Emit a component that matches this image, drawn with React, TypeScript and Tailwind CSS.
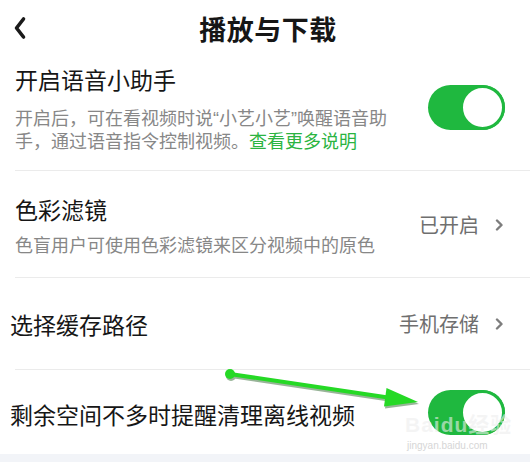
import React from "react";

const font = {
  fontFamily: '"Noto Sans CJK SC", "Noto Sans", sans-serif',
};

const latin = { fontFamily: '"Liberation Sans", sans-serif' };

function Toggle() {
  return (
    <div className="w-[77px] h-[45px] rounded-full bg-[#1fb83f] flex justify-end shrink-0">
      <div className="w-[45px] h-[45px] rounded-full bg-white border-[3px] border-[#1fb83f]" />
    </div>
  );
}

function Chevron() {
  return (
    <svg width="10" height="12" viewBox="0 0 10 12" className="shrink-0">
      <path
        d="M3 1.5 L7.5 6 L3 10.5"
        fill="none"
        stroke="#7d7d7d"
        strokeWidth="2.4"
        strokeLinecap="round"
        strokeLinejoin="round"
      />
    </svg>
  );
}

function Divider() {
  return <div className="h-px ml-[15px] bg-[#ebebeb]" />;
}

export default function App() {
  return (
    <div
      className="relative w-[530px] h-[462px] bg-white overflow-hidden text-[#161616]"
      style={font}
    >
      {/* header */}
      <div className="relative h-[58px] flex items-center justify-center">
        <svg
          width="14"
          height="24"
          viewBox="0 0 14 24"
          className="absolute left-[13px] top-[16px]"
        >
          <path
            d="M10.5 3 L3.5 12 L10.5 21"
            fill="none"
            stroke="#1a1a1a"
            strokeWidth="3.6"
            strokeLinecap="round"
            strokeLinejoin="round"
          />
        </svg>
        <h1 className="text-[27px] leading-[34px] font-bold tracking-[0.5px] pl-[6px]">
          播放与下载
        </h1>
      </div>

      {/* voice assistant */}
      <div className="flex items-center justify-between pl-[15px] pr-[25px] pt-[6px] pb-[19px]">
        <div>
          <div className="text-[23px] leading-[30px]">开启语音小助手</div>
          <div className="mt-[13px] text-[18px] leading-[21px] text-[#878787] whitespace-nowrap">
            <div>
              开启后，可在看视频时说<span style={latin}>“</span>小艺小艺
              <span style={latin}>”</span>唤醒语音助
            </div>
            <div>
              手，通过语音指令控制视频。
              <span className="text-[#2bb441]">查看更多说明</span>
            </div>
          </div>
        </div>
        <Toggle />
      </div>
      <Divider />

      {/* color filter */}
      <div className="h-[106px] flex items-center justify-between pl-[15px] pr-[26px]">
        <div>
          <div className="text-[23px] leading-[30px]">色彩滤镜</div>
          <div className="mt-[10px] text-[18px] leading-[20px] text-[#878787]">
            色盲用户可使用色彩滤镜来区分视频中的原色
          </div>
        </div>
        <div className="flex items-center gap-[15px] pt-[2px]">
          <span className="text-[20px] leading-[26px] text-[#6f6f6f]">已开启</span>
          <Chevron />
        </div>
      </div>
      <Divider />

      {/* cache path */}
      <div className="h-[91px] flex items-center justify-between pl-[10px] pr-[26px]">
        <div className="text-[23px] leading-[30px]">选择缓存路径</div>
        <div className="flex items-center gap-[15px]">
          <span className="text-[20px] leading-[26px] text-[#6f6f6f]">手机存储</span>
          <Chevron />
        </div>
      </div>
      <Divider />

      {/* low storage reminder */}
      <div className="h-[84px] flex items-center justify-between pl-[10px] pr-[25px]">
        <div className="text-[23px] leading-[30px] pt-[4px]">
          剩余空间不多时提醒清理离线视频
        </div>
        <Toggle />
      </div>

      <div className="h-[9px] bg-[#f2f4f8]" />

      {/* annotation arrow */}
      <svg
        width="530"
        height="462"
        viewBox="0 0 530 462"
        className="absolute left-0 top-0 pointer-events-none"
      >
        <g opacity="0.45" transform="translate(1 2)">
          <line x1="230" y1="374" x2="388" y2="397.5" stroke="#1d5a1d" strokeWidth="4" />
          <circle cx="230" cy="374" r="5" fill="#1d5a1d" />
          <polygon points="418,402 386.5,388 384,406.5" fill="#1d5a1d" />
        </g>
        <line x1="230" y1="374" x2="388" y2="397.5" stroke="#25d925" strokeWidth="4" strokeLinecap="round" />
        <circle cx="230" cy="374" r="5" fill="#25d925" />
        <polygon points="418,402 386.5,388 384,406.5" fill="#25d925" />
      </svg>

      {/* watermark */}
      <div
        className="absolute left-[405px] top-[413px] text-[21px] leading-[24px] font-bold text-[#eeeeee]/60 tracking-[1px] pointer-events-none"
        style={{ fontFamily: '"Liberation Sans", "Noto Sans CJK SC", sans-serif' }}
      >
        Baidu经验
      </div>
      <div
        className="absolute left-[407px] top-[440px] text-[10px] leading-[12px] text-[#d6d6d6] pointer-events-none"
        style={latin}
      >
        jingyan.baidu.com
      </div>
    </div>
  );
}
